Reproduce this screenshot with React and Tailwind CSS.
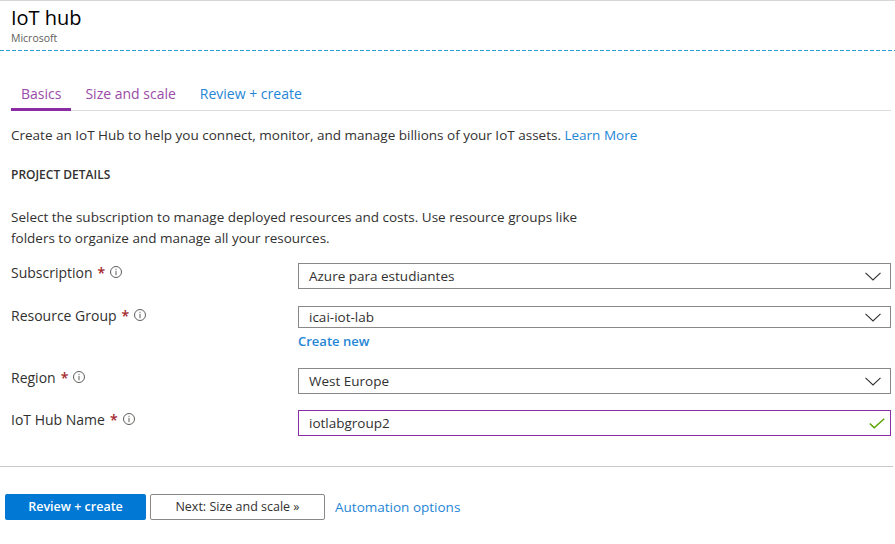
import React from 'react';

const Info = () => (
  <svg width="12" height="12" viewBox="0 0 12 12" className="inline-block">
    <circle cx="6" cy="6" r="5.5" fill="none" stroke="#605e5c" strokeWidth="1" />
    <rect x="5.5" y="2.8" width="1" height="1" fill="#605e5c" />
    <rect x="5.5" y="4.8" width="1" height="4.4" fill="#605e5c" />
  </svg>
);

const Chevron = () => (
  <svg width="16" height="9" viewBox="0 0 16 9">
    <path d="M0.5 0.8 L8 8 L15.5 0.8" fill="none" stroke="#323130" strokeWidth="1.1" />
  </svg>
);

const Check = () => (
  <svg width="16" height="11" viewBox="0 0 16 11">
    <path d="M0.8 5.6 L5.2 9.8 L15.2 0.8" fill="none" stroke="#57a300" strokeWidth="1.4" />
  </svg>
);

const Label = ({ text }) => (
  <div className="w-[287px] shrink-0 flex items-center gap-[5px] h-[18px] text-[14px] text-[#323130]">
    <span>{text}</span>
    <span className="text-[#a4262c] font-semibold">*</span>
    <Info />
  </div>
);

const Select = ({ value }) => (
  <div className="flex-1 h-[26px] border border-[#8a8886] flex items-center justify-between pl-[10px] pr-[9px] text-[13.5px] text-[#323130]">
    <span>{value}</span>
    <Chevron />
  </div>
);

const App = () => {
  return (
    <div className="w-[895px] h-[544px] bg-white overflow-hidden border-t border-[#d6d6d6]" style={{ fontFamily: '"Open Sans", "Noto Sans", sans-serif' }}>
      {/* Header */}
      <div className="pl-[11px] pt-[5px]">
        <div className="text-[20px] leading-[24px] text-black">IoT hub</div>
        <div className="mt-[1px] text-[10.5px] leading-[14px] text-[#605e5c]">Microsoft</div>
      </div>
      <div className="mt-[5px] h-px bg-[linear-gradient(to_right,#2aa0da_4px,transparent_4px)] bg-[length:6px_1px]"></div>

      <div className="pl-[11px] pr-[4px]">
        {/* Tabs */}
        <div className="mt-[33px] flex gap-[4px] border-b border-[#dcdcdc]">
          <div className="px-[10px] pb-[4px] text-[14px] leading-[20px] text-[#9a4ba8] border-b-[3px] border-[#8a2da5] -mb-px">Basics</div>
          <div className="px-[10px] pb-[4px] text-[14px] leading-[20px] text-[#9a4ba8]">Size and scale</div>
          <div className="px-[10px] pb-[4px] text-[14px] leading-[20px] text-[#1f86d6]">Review + create</div>
        </div>

        <p className="mt-[14px] text-[13.5px] leading-[20px] text-[#323130]">
          Create an IoT Hub to help you connect, monitor, and manage billions of your IoT assets.{' '}
          <span className="text-[#1f86d6]">Learn More</span>
        </p>

        <div className="mt-[20px] text-[12px] leading-[20px] font-semibold text-[#323130]">PROJECT DETAILS</div>

        <p className="mt-[22px] text-[13.5px] leading-[21px] text-[#323130]">
          Select the subscription to manage deployed resources and costs. Use resource groups like
          <br />
          folders to organize and manage all your resources.
        </p>

        {/* Form */}
        <div className="mt-[14px] flex flex-col">
          <div className="flex items-start">
            <Label text="Subscription" />
            <Select value="Azure para estudiantes" />
          </div>
          <div className="mt-[17px] flex items-start">
            <Label text="Resource Group" />
            <div className="flex-1 flex flex-col">
              <Select value="icai-iot-lab" />
              <div className="mt-[4px] text-[13px] leading-[18px] font-semibold text-[#1f86d6]">Create new</div>
            </div>
          </div>
          <div className="mt-[18px] flex items-start">
            <Label text="Region" />
            <Select value="West Europe" />
          </div>
          <div className="mt-[16px] flex items-start">
            <Label text="IoT Hub Name" />
            <div className="flex-1 h-[26px] border border-[#8a2da5] flex items-center justify-between pl-[10px] pr-[5px] text-[13.5px] text-[#323130]">
              <span>iotlabgroup2</span>
              <Check />
            </div>
          </div>
        </div>
      </div>

      <div className="mt-[30px] mr-[2px] h-px bg-[#c8c8c8]"></div>

      {/* Footer buttons */}
      <div className="mt-[27px] pl-[5px] flex items-center gap-[4px]">
        <button className="w-[141px] h-[26px] bg-[#0078d4] rounded-[2px] text-white text-[12.5px] font-semibold">Review + create</button>
        <button className="w-[175px] h-[26px] border border-[#8a8886] rounded-[2px] text-[#323130] text-[12.5px]">Next: Size and scale »</button>
        <span className="ml-[6px] text-[13.5px] text-[#1f86d6]">Automation options</span>
      </div>
    </div>
  );
};

export default App;
